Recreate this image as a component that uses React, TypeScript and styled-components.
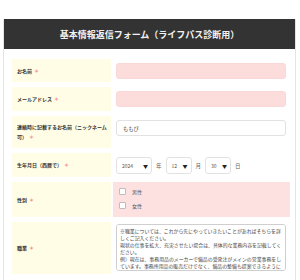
import React from "react";
import styled, { createGlobalStyle } from "styled-components";

const Global = createGlobalStyle`
  html, body {
    margin: 0;
    padding: 0;
    background: #ffffff;
    font-family: "Noto Sans CJK JP", "Noto Sans", sans-serif;
  }
`;

const Wrapper = styled.div`
  margin: 19px 4px 0 3px;
  border-left: 1px solid #e4e4e4;
  border-right: 1px solid #e4e4e4;
  height: 261px;
  overflow: hidden;
`;

const Header = styled.div`
  height: 30px;
  background: #333333;
  display: flex;
  align-items: center;
  justify-content: center;

  & h1 {
    margin: 0;
    font-size: 9px;
    font-weight: 700;
    color: #f2f2f2;
  }
`;

const Form = styled.form`
  display: flex;
  flex-direction: column;
  gap: 5px;
  padding: 10px 5px 0 8px;
`;

const Row = styled.div<{ $height: number }>`
  display: grid;
  grid-template-columns: 99px 1fr;
  column-gap: 2px;
  min-height: ${(p) => p.$height}px;
`;

const Label = styled.div`
  background: #fffde6;
  display: flex;
  align-items: center;
  padding: 0 2px 0 5px;
  font-size: 5px;
  font-weight: 700;
  line-height: 10px;
  color: #333333;
`;

const LabelText = styled.span`
  &::after {
    content: "＊";
    color: #ef8a8a;
    margin-left: 2px;
  }
`;

const Field = styled.div<{ $pink?: boolean }>`
  background: ${(p) => (p.$pink ? "#fde0e0" : "transparent")};
  padding: 4px 4px 3px 3px;
  display: flex;
  flex-direction: column;
`;

const TextInput = styled.input<{ $empty?: boolean }>`
  box-sizing: border-box;
  width: 100%;
  height: 16px;
  border-radius: 3px;
  border: 1px solid ${(p) => (p.$empty ? "#fbd8d8" : "#e2e2e2")};
  background: ${(p) => (p.$empty ? "#fddcdc" : "#ffffff")};
  padding: 0 6px;
  font-family: inherit;
  font-size: 5.2px;
  color: #444444;
  outline: none;
`;

const DateLine = styled.div`
  display: flex;
  align-items: center;
  gap: 4px;
  font-size: 5.5px;
  color: #666666;
`;

const SelectBox = styled.div<{ $width: number }>`
  box-sizing: border-box;
  width: ${(p) => p.$width}px;
  height: 17px;
  border: 1px solid #e2e2e2;
  border-radius: 3px;
  background: #ffffff;
  display: flex;
  align-items: center;
  justify-content: space-between;
  padding: 0 3px 0 5px;
  font-size: 5px;
  color: #555555;

  & i {
    font-style: normal;
    font-size: 5px;
    color: #222222;
  }
`;

const CheckList = styled.div`
  display: flex;
  flex-direction: column;
  gap: 7px;
  padding: 2px 0 0 3px;
`;

const CheckItem = styled.label`
  display: flex;
  align-items: center;
  gap: 6px;
  font-size: 5px;
  color: #555555;

  & b {
    box-sizing: border-box;
    width: 7px;
    height: 7px;
    background: #ffffff;
    border: 1px solid #bdbdbd;
    border-radius: 1px;
  }
`;

const Memo = styled.textarea`
  box-sizing: border-box;
  width: 100%;
  height: 47px;
  margin-top: -2px;
  border: 1px solid #cfcfcf;
  border-radius: 3px;
  padding: 2px 2px 2px 3px;
  font-family: inherit;
  font-size: 4.9px;
  line-height: 7px;
  color: #444444;
  resize: none;
  overflow-y: scroll;
  outline: none;

  &::-webkit-scrollbar {
    width: 5px;
  }
  &::-webkit-scrollbar-track {
    background: #f0f0f0;
  }
  &::-webkit-scrollbar-thumb {
    background: #b8b8b8;
  }
`;

const memoText =
  "※職業については、これから先にやっていきたいことがあればそちらを詳しくご記入ください。\n" +
  "現状の仕事を拡大、充実させたい場合は、具体的な業務内容を記載してください。\n" +
  "例）現在は、事務用品のメーカーで備品の受発注がメインの営業事務をしています。事務所用品の販売だけでなく、備品の整備も提案できるようになりたい。";

const App = () => {
  return (
    <>
      <Global />
      <Wrapper>
        <Header>
          <h1>基本情報返信フォーム（ライフパス診断用）</h1>
        </Header>
        <Form>
          <Row $height={23}>
            <Label>
              <LabelText>お名前</LabelText>
            </Label>
            <Field>
              <TextInput $empty />
            </Field>
          </Row>
          <Row $height={24}>
            <Label>
              <LabelText>メールアドレス</LabelText>
            </Label>
            <Field>
              <TextInput $empty />
            </Field>
          </Row>
          <Row $height={32}>
            <Label>
              <LabelText>連絡時に記載するお名前（ニックネーム可）</LabelText>
            </Label>
            <Field>
              <TextInput defaultValue="ももぴ" />
            </Field>
          </Row>
          <Row $height={23}>
            <Label>
              <LabelText>生年月日（西暦で）</LabelText>
            </Label>
            <Field>
              <DateLine>
                <SelectBox $width={36}>
                  2024<i>▼</i>
                </SelectBox>
                年
                <SelectBox $width={26}>
                  12<i>▼</i>
                </SelectBox>
                月
                <SelectBox $width={26}>
                  30<i>▼</i>
                </SelectBox>
                日
              </DateLine>
            </Field>
          </Row>
          <Row $height={35}>
            <Label>
              <LabelText>性別</LabelText>
            </Label>
            <Field $pink>
              <CheckList>
                <CheckItem>
                  <b />
                  男性
                </CheckItem>
                <CheckItem>
                  <b />
                  女性
                </CheckItem>
              </CheckList>
            </Field>
          </Row>
          <Row $height={50}>
            <Label>
              <LabelText>職業</LabelText>
            </Label>
            <Field>
              <Memo defaultValue={memoText} />
            </Field>
          </Row>
        </Form>
      </Wrapper>
    </>
  );
};

export default App;
